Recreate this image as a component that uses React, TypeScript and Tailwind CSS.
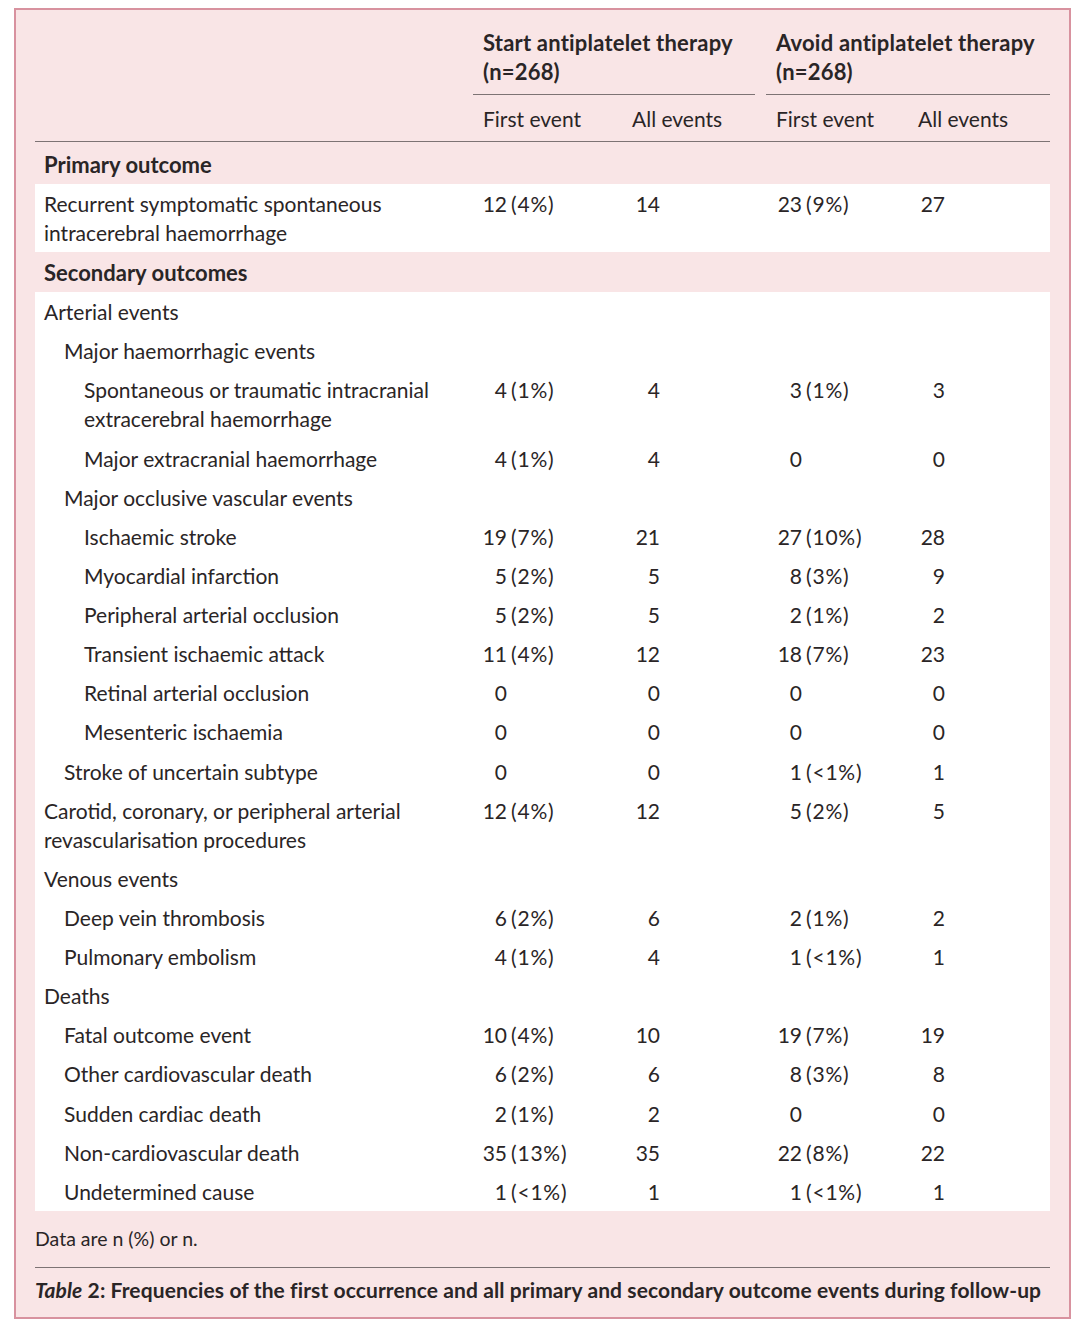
import React from "react";

type Row = {
  label: string[];
  level: number;
  v?: [string, string, string, string];
};

const secondary: Row[] = [
  { label: ["Arterial events"], level: 0 },
  { label: ["Major haemorrhagic events"], level: 1 },
  { label: ["Spontaneous or traumatic intracranial", "extracerebral haemorrhage"], level: 2, v: ["4 (1%)", "4", "3 (1%)", "3"] },
  { label: ["Major extracranial haemorrhage"], level: 2, v: ["4 (1%)", "4", "0", "0"] },
  { label: ["Major occlusive vascular events"], level: 1 },
  { label: ["Ischaemic stroke"], level: 2, v: ["19 (7%)", "21", "27 (10%)", "28"] },
  { label: ["Myocardial infarction"], level: 2, v: ["5 (2%)", "5", "8 (3%)", "9"] },
  { label: ["Peripheral arterial occlusion"], level: 2, v: ["5 (2%)", "5", "2 (1%)", "2"] },
  { label: ["Transient ischaemic attack"], level: 2, v: ["11 (4%)", "12", "18 (7%)", "23"] },
  { label: ["Retinal arterial occlusion"], level: 2, v: ["0", "0", "0", "0"] },
  { label: ["Mesenteric ischaemia"], level: 2, v: ["0", "0", "0", "0"] },
  { label: ["Stroke of uncertain subtype"], level: 1, v: ["0", "0", "1 (<1%)", "1"] },
  { label: ["Carotid, coronary, or peripheral arterial", "revascularisation procedures"], level: 0, v: ["12 (4%)", "12", "5 (2%)", "5"] },
  { label: ["Venous events"], level: 0 },
  { label: ["Deep vein thrombosis"], level: 1, v: ["6 (2%)", "6", "2 (1%)", "2"] },
  { label: ["Pulmonary embolism"], level: 1, v: ["4 (1%)", "4", "1 (<1%)", "1"] },
  { label: ["Deaths"], level: 0 },
  { label: ["Fatal outcome event"], level: 1, v: ["10 (4%)", "10", "19 (7%)", "19"] },
  { label: ["Other cardiovascular death"], level: 1, v: ["6 (2%)", "6", "8 (3%)", "8"] },
  { label: ["Sudden cardiac death"], level: 1, v: ["2 (1%)", "2", "0", "0"] },
  { label: ["Non-cardiovascular death"], level: 1, v: ["35 (13%)", "35", "22 (8%)", "22"] },
  { label: ["Undetermined cause"], level: 1, v: ["1 (<1%)", "1", "1 (<1%)", "1"] },
];

const indent = ["pl-[9px]", "pl-[29px]", "pl-[49px]"];

function Val({ text, box }: { text: string; box: string }) {
  const i = text.indexOf(" ");
  const num = i >= 0 ? text.slice(0, i) : text;
  const rest = i >= 0 ? text.slice(i + 1) : "";
  return (
    <div className="flex whitespace-nowrap">
      <span className={`${box} text-right`}>{num}</span>
      {rest && <span className="ml-[4px] tracking-[0.8px]">{rest}</span>}
    </div>
  );
}

function DataRow({ r }: { r: Row }) {
  return (
    <div className="flex py-[5.07px]">
      <div className={`w-[438px] ${indent[r.level]} whitespace-nowrap`}>
        {r.label.map((l, k) => (
          <div key={k}>{l}</div>
        ))}
      </div>
      {r.v && (
        <>
          <div className="w-[149px]"><Val text={r.v[0]} box="w-[34px]" /></div>
          <div className="w-[144px]"><Val text={r.v[1]} box="w-[38px]" /></div>
          <div className="w-[142px]"><Val text={r.v[2]} box="w-[36px]" /></div>
          <div className="w-[142px]"><Val text={r.v[3]} box="w-[37px]" /></div>
        </>
      )}
    </div>
  );
}

export default function App() {
  return (
    <div
      className="w-[1080px] h-[1326px] bg-white pt-[8px] pl-[14px] text-[#2a2526]"
      style={{ fontFamily: "Lato, 'Open Sans', sans-serif" }}
    >
      <div className="w-[1057px] h-[1311px] border-2 border-[#d8929f] bg-[#f9e5e6] px-[19px] pt-[18px] text-[21px] leading-[29px]">
        {/* Header */}
        <div className="flex">
          <div className="w-[438px]" />
          <div className="w-[282px]">
            <div className="pl-[10px] font-bold text-[22px] tracking-[0.2px] pb-[8px] border-b border-[#7d7374]">
              <div>Start antiplatelet therapy</div>
              <div>(n=268)</div>
            </div>
            <div className="flex h-[46px] items-center">
              <div className="w-[149px] pl-[10px]">First event</div>
              <div className="pl-[10px]">All events</div>
            </div>
          </div>
          <div className="w-[11px]" />
          <div className="w-[284px]">
            <div className="pl-[10px] font-bold text-[22px] tracking-[0.2px] pb-[8px] border-b border-[#7d7374]">
              <div>Avoid antiplatelet therapy</div>
              <div>(n=268)</div>
            </div>
            <div className="flex h-[46px] items-center">
              <div className="w-[142px] pl-[10px]">First event</div>
              <div className="pl-[10px]">All events</div>
            </div>
          </div>
        </div>
        <div className="border-t border-[#7d7374]" />

        <div className="h-[42px] pt-[8px] pl-[9px] font-bold text-[22px]">Primary outcome</div>
        <div className="bg-white">
          <DataRow
            r={{
              label: ["Recurrent symptomatic spontaneous", "intracerebral haemorrhage"],
              level: 0,
              v: ["12 (4%)", "14", "23 (9%)", "27"],
            }}
          />
        </div>
        <div className="h-[40px] pt-[6px] pl-[9px] font-bold text-[22px]">Secondary outcomes</div>
        <div className="bg-white">
          {secondary.map((r, k) => (
            <DataRow key={k} r={r} />
          ))}
        </div>

        <div className="pt-[15px] pb-[15px] text-[19.5px] leading-[26px]">Data are n (%) or n.</div>
        <div className="border-t border-[#7d7374]" />
        <div className="pt-[7px] font-bold whitespace-nowrap tracking-[0.1px]">
          <i>Table</i> 2: Frequencies of the first occurrence and all primary and secondary outcome events during follow-up
        </div>
      </div>
    </div>
  );
}
